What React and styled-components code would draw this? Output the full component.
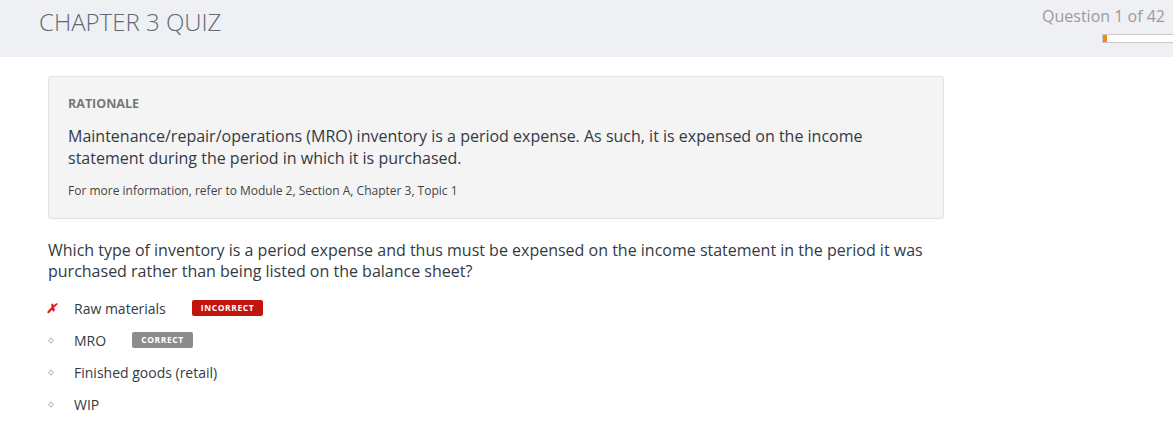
import React from 'react';
import styled, { createGlobalStyle } from 'styled-components';

const GlobalStyle = createGlobalStyle`
  html, body {
    margin: 0;
    padding: 0;
    background: #ffffff;
    font-family: "Open Sans", "Liberation Sans", sans-serif;
  }
`;

const Header = styled.div`
  background: #eff0f3;
  height: 57px;
  display: flex;
  justify-content: space-between;
  align-items: flex-start;
`;

const Title = styled.h1`
  margin: 6px 0 0 39px;
  font-size: 24px;
  font-weight: 300;
  color: #5d6878;
  line-height: 32px;
`;

const Progress = styled.div`
  display: flex;
  flex-direction: column;
  align-items: flex-end;
  padding-top: 5px;
`;

const Counter = styled.div`
  font-size: 16px;
  color: #9b9b9b;
  line-height: 22px;
  margin-right: 8px;
`;

const Track = styled.div`
  margin-top: 7px;
  width: 70px;
  height: 7px;
  background: #ffffff;
  border: 1px solid #c9c9c9;
  border-right: none;
  display: flex;
`;

const Fill = styled.div`
  background: #f0891c;
  height: 100%;
`;

const Main = styled.div`
  padding: 19px 0 0 48px;
  width: 896px;
`;

const Rationale = styled.div`
  background: #f4f4f4;
  border: 1px solid #e2e2e2;
  border-radius: 3px;
  padding: 19px 19px 19px 19px;
`;

const Label = styled.div`
  font-size: 12.5px;
  font-weight: 700;
  color: #777777;
  line-height: 16px;
`;

const Body = styled.p`
  margin: 13px 0 0;
  font-size: 16px;
  line-height: 22px;
  color: #333a44;
`;

const Source = styled.p`
  margin: 13px 0 0;
  font-size: 12px;
  line-height: 17px;
  color: #444444;
`;

const Question = styled.p`
  margin: 21px 0 0;
  font-size: 16px;
  line-height: 21px;
  color: #333a44;
`;

const Options = styled.ul`
  list-style: none;
  margin: 10px 0 0;
  padding: 0;
`;

const Option = styled.li`
  display: flex;
  align-items: center;
  height: 32px;
  font-size: 14px;
  color: #333a44;
`;

const Mark = styled.span`
  width: 6px;
  margin-right: 20px;
  display: inline-flex;
  justify-content: center;
  font-size: 13px;
  font-weight: 700;
  font-style: italic;
  color: #e0161e;
`;

const Badge = styled.span`
  margin-left: 26px;
  padding: 0 9px;
  height: 16px;
  line-height: 16px;
  border-radius: 2px;
  font-size: 8.5px;
  font-weight: 700;
  letter-spacing: 0.6px;
  color: #ffffff;
  background: ${p => (p.correct ? '#8c8c8c' : '#c3150f')};
`;

const Bullet = () => (
  <svg width="7" height="7" viewBox="0 0 7 7">
    <path d="M3.5 0.5 L6.5 3.5 L3.5 6.5 L0.5 3.5 Z" fill="none" stroke="#bdbdbd" strokeWidth="1.2" />
  </svg>
);

const options = [
  { text: 'Raw materials', wrong: true, badge: 'INCORRECT' },
  { text: 'MRO', badge: 'CORRECT', correct: true },
  { text: 'Finished goods (retail)' },
  { text: 'WIP' },
];

export default function App() {
  return (
    <>
      <GlobalStyle />
      <Header>
        <Title>CHAPTER 3 QUIZ</Title>
        <Progress>
          <Counter>Question 1 of 42</Counter>
          <Track>
            <Fill style={{ width: `${(1 / 42) * 100 * 2.3}%` }} />
          </Track>
        </Progress>
      </Header>
      <Main>
        <Rationale>
          <Label>RATIONALE</Label>
          <Body>
            Maintenance/repair/operations (MRO) inventory is a period expense. As such, it is expensed on the income
            statement during the period in which it is purchased.
          </Body>
          <Source>For more information, refer to Module 2, Section A, Chapter 3, Topic 1</Source>
        </Rationale>
        <Question>
          Which type of inventory is a period expense and thus must be expensed on the income statement in the period it was
          purchased rather than being listed on the balance sheet?
        </Question>
        <Options>
          {options.map(o => (
            <Option key={o.text}>
              <Mark>{o.wrong ? '✗' : <Bullet />}</Mark>
              {o.text}
              {o.badge && <Badge correct={o.correct}>{o.badge}</Badge>}
            </Option>
          ))}
        </Options>
      </Main>
    </>
  );
}
